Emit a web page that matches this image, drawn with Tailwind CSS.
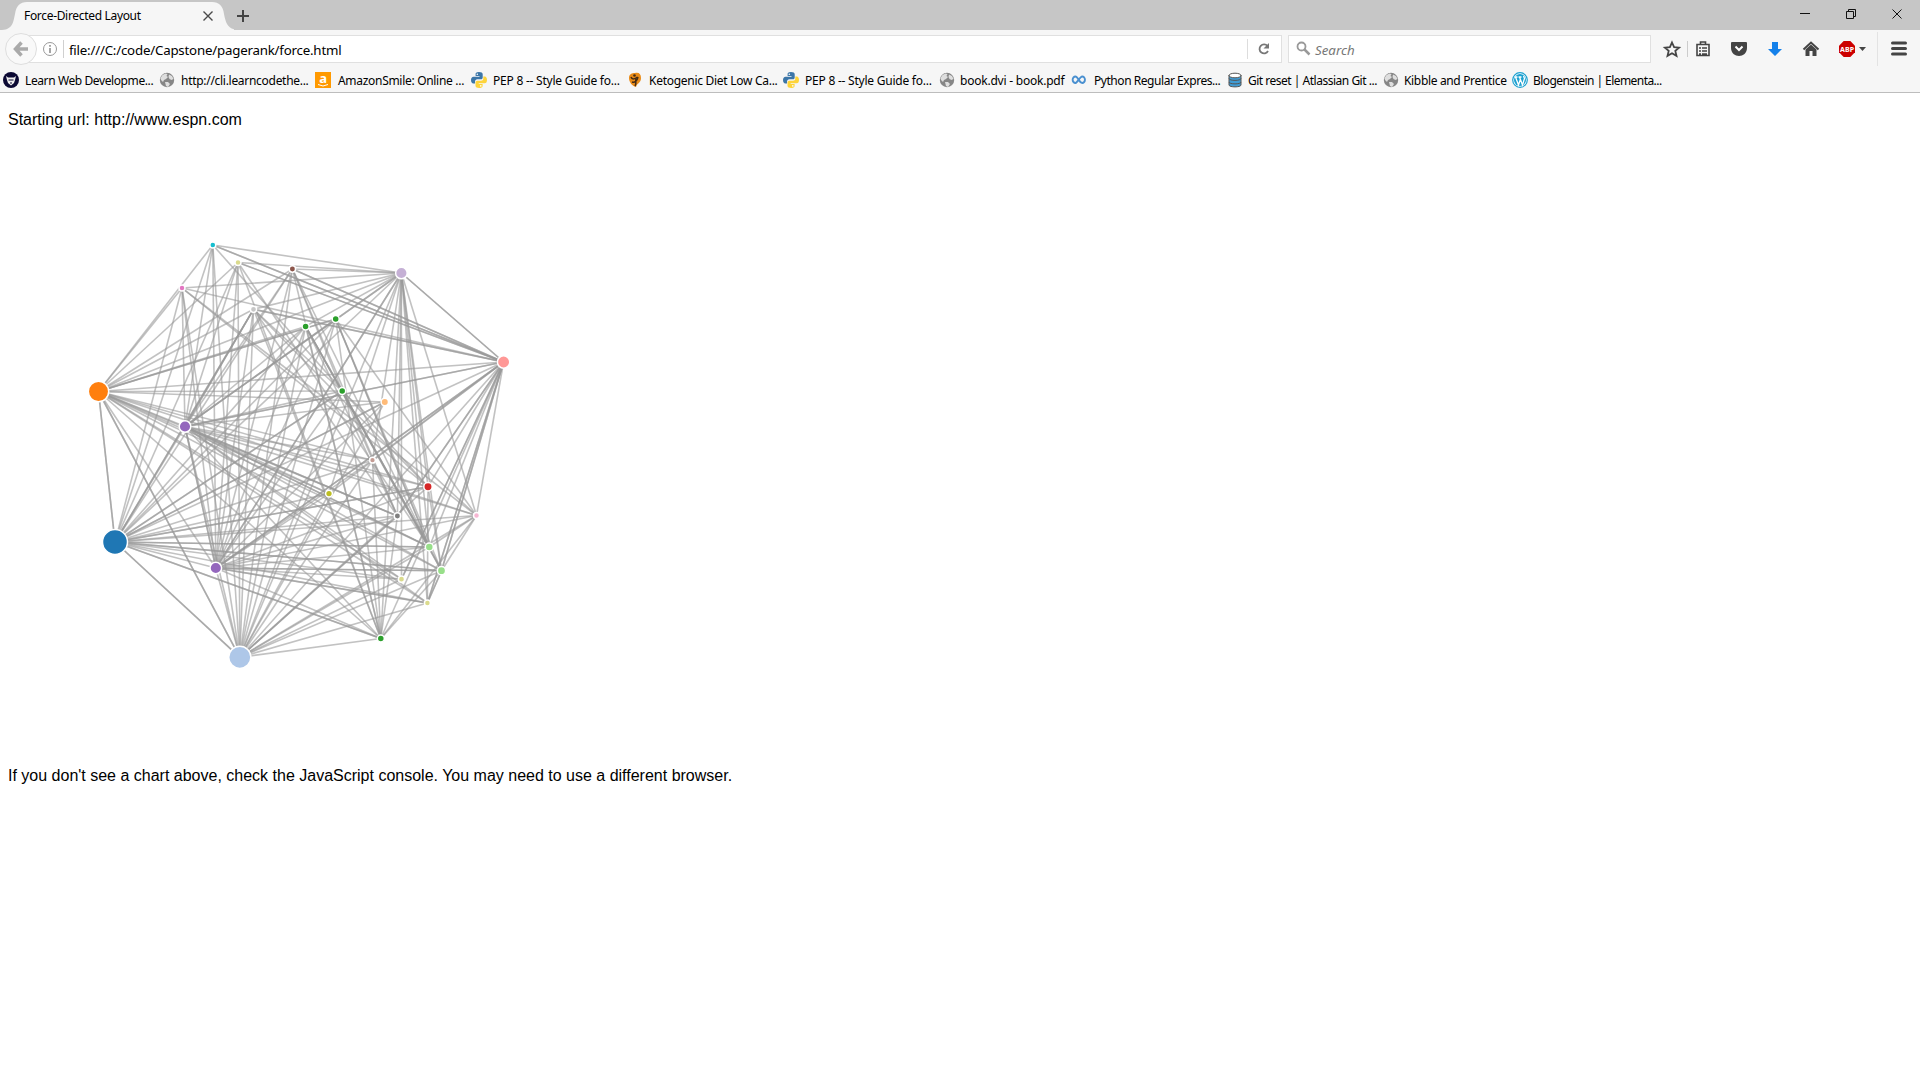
<!DOCTYPE html>
<html lang="en"><head><meta charset="utf-8"><title>Force-Directed Layout</title>
<script src="https://cdn.jsdelivr.net/npm/@tailwindcss/browser@4"></script></head>
<body class="h-screen overflow-hidden bg-white text-black font-['Noto_Sans',sans-serif]">
<svg class="hidden">
<symbol id="globe" viewBox="0 0 16 16"><circle cx="8" cy="8" r="7.2" fill="#868686"/><path d="M1.500 6l2-3 3-1.500 2 .5-1 2 1.500 1-2 2-2 1-1 2-2-2zM10 2.500l3 1.500 1.500 3-2 1-2-1-1-2zM6 10l3 0 2 2-2 3-2-1z" fill="#dedede"/></symbol>
<symbol id="py" viewBox="0 0 16 16"><path d="M8 0C5 0 4.600 1 4.600 2.200V4H8.500v.7H2.500C1 4.700 0 6 0 8s1 3.500 2.300 3.500H4V9.600C4 8.300 5 7.300 6.300 7.300H10c1 0 1.700-.8 1.700-1.800V2.200C11.700.8 10.300 0 8 0z" fill="#3c76a8"/><path d="M8.200 16c3 0 3.400-1 3.400-2.200V12H7.700v-.7h6C15.200 11.300 16 10 16 8s-.9-3.500-2.200-3.500h-1.500v2c0 1.300-1 2.300-2.300 2.300H6.300c-1 0-1.800.8-1.800 1.800v3.200C4.500 15.200 6 16 8.200 16z" fill="#fdd43b"/><circle cx="6.300" cy="2.200" r=".8" fill="#fff"/><circle cx="9.800" cy="13.900" r=".8" fill="#fff"/></symbol>
</svg>
<header>
<div class="flex h-[30px] bg-[#c6c6c6]">
 <div class="relative h-[30px] w-[234px]">
  <svg class="absolute inset-0" width="234" height="30"><path d="M0 30C12 30 13 24 15 14C16 6 20 2 27 2H212C219 2 223 6 224 14C226 24 228 30 240 30z" fill="#f6f6f6"/><path d="M203.500 11.500l9 9m0-9l-9 9" stroke="#4a4a4a" stroke-width="1.400"/></svg>
  <span class="relative ml-6 block pt-[7px] text-[12px] leading-[18px] tracking-[-0.32px]">Force-Directed Layout</span>
 </div>
 <svg width="18" height="30"><path d="M3 16h12M9 10v12" stroke="#444" stroke-width="2"/></svg>
 <svg class="ml-auto" width="130" height="30" fill="none" stroke="#111"><path d="M10 13.500h10M56.500 11.500h7v7h-7zM58.500 11v-1.500h7v7h-2M102.500 9.500l9 9m0-9l-9 9"/></svg>
</div>
<div class="flex h-9 items-center bg-[#f6f6f6]">
 <svg class="z-10" width="40" height="36"><circle cx="21" cy="19" r="15.500" fill="#f9f9f9" stroke="#dedede"/><path d="M28 19H17M21.500 12.500L15.500 19l6 6.500" fill="none" stroke="#aaa" stroke-width="3.500"/></svg>
 <div class="-ml-3 mt-[2px] flex h-7 w-[1254px] items-center border border-[#e0e0e0] bg-white">
  <svg class="ml-[14px]" width="22" height="26"><circle cx="7" cy="13" r="6.500" fill="none" stroke="#999"/><path d="M7 12v5M7 9v1.800" stroke="#888" stroke-width="1.500"/><path d="M20.500 4v18" stroke="#d0d0d0"/></svg>
  <span class="ml-[4px] pt-[2px] text-[13.300px] leading-[18px] tracking-[-0.21px]">file:///C:/code/Capstone/pagerank/force.html</span>
  <svg class="ml-auto" width="34" height="26"><path d="M.5 3v20" stroke="#ddd"/><path d="M20.500 10A4.500 4.500 0 1 0 21 15" fill="none" stroke="#777" stroke-width="1.800"/><path d="M22 7v5.500h-5.500z" fill="#777"/></svg>
 </div>
 <div class="ml-[6px] mt-[2px] flex h-7 w-[363px] items-center border border-[#e0e0e0] bg-white">
  <svg class="ml-[6px]" width="18" height="26"><circle cx="6.500" cy="10.500" r="4" fill="none" stroke="#999" stroke-width="1.800"/><path d="M9.500 13.500l5 5" stroke="#999" stroke-width="2.500"/></svg>
  <span class="ml-[2px] pt-[2px] text-[13.300px] italic leading-[18px] text-[#777]">Search</span>
 </div>
 <svg class="ml-auto" width="269" height="36" fill="none" stroke="#444"><path d="M21 12.500l2.100 4.600 5 .5-3.800 3.300 1.200 4.900-4.500-2.600-4.500 2.600 1.200-4.900-3.800-3.300 5-.5z" stroke-width="1.800"/><path d="M36.500 11v16" stroke="#ccc"/><path d="M46 14.500h12v11H46zM49.500 14v-2h5v2M48 18h2m1 0h5m-8 3h2m1 0h5m-8 3h2m1 0h5" stroke-width="1.600"/><path d="M81 12h14q1 0 1 1v5c0 5-4 8-8 8s-8-3-8-8v-5q0-1 1-1z" fill="#444" stroke="none"/><path d="M84.500 16.500l3.500 3.500 3.500-3.500" stroke="#fff" stroke-width="2"/><path d="M121 12h6v7h4l-7 7-7-7h4z" fill="#1581ea" stroke="none"/><path d="M152.500 19.500L160 12.500l7.500 7" stroke-width="2"/><path d="M154.500 19.500l5.500-5 5.500 5V26h-4v-5h-3v5h-4z" fill="#444" stroke="none"/><path d="M192.700 11h6.600l4.700 4.700v6.600l-4.700 4.700h-6.600l-4.700-4.700v-6.600z" fill="#c00" stroke="none"/><text x="189" y="22" textLength="14" font-size="7" font-weight="700" fill="#fff" stroke="none">ABP</text><path d="M208 17h7l-3.500 4z" fill="#444" stroke="none"/><path d="M226.500 2v34" stroke="#e3e3e3"/><path d="M241.500 13h13M241.500 18.500h13M241.500 24h13" stroke-width="3" stroke-linecap="round"/></svg>
</div>
<nav id="bookmarks" class="flex h-[27px] border-b border-[#bdbdbd] bg-[#f6f6f6] pt-[2px] text-[12px] leading-[18px]"></nav>
</header>
<main class="px-2 pt-[18px] font-['Liberation_Sans',sans-serif] text-base leading-[18px]">
 <p class="h-[18px]">Starting url: http://www.espn.com</p>
 <svg id="chart" class="-ml-2 block" width="720" height="637" viewBox="0 129 720 637"></svg>
 <p class="pt-[1px]">If you don't see a chart above, check the JavaScript console. You may need to use a different browser.</p>
</main>
<script>
const icons={
 learn:'<circle cx="8" cy="8" r="8" fill="#0b0933"/><path d="M3 4l2 1.500h6L13 4l-1 4-1 3-3 2.500L5 11 4 8z" fill="#eee"/><path d="M5.500 8h5M7 11h2" stroke="#0b0933"/>',
 globe:'<use href="#globe"/>',py:'<use href="#py"/>',
 amz:'<path d="M0 0h16v16H0z" fill="#f90"/><text x="4.200" y="10.500" font-size="13" font-weight="700" fill="#fff">a</text><path d="M3 12.500q5 3 10 0" fill="none" stroke="#fff"/>',
 keto:'<path d="M8 1c4-1 6 1 6 5 0 5-4 5-5 9-4-1-7-5-7-9 0-4 3-5 6-5z" fill="#e98b18"/><path d="M4 5c1 3 4 2 6.500 0M5 10c3 1 5-1 6-5M9 7c-1 3 1 4-1 7" fill="none" stroke="#432b16" stroke-width="1.500"/><circle cx="7.500" cy="3.500" r="1.300" fill="#432b16"/>',
 inf:'<path d="M8 8C6 5 5 4.500 4 4.500a3.200 3.200 0 0 0 0 6.500C6 11 9.500 4.500 12 4.500a3.200 3.200 0 0 1 0 6.500C10.500 11 9.500 10 8 8" transform="translate(1 0) scale(.85 1)" fill="none" stroke="#4a90d0" stroke-width="2.200"/>',
 db:'<path d="M2 3v10c0 2.500 12 2.500 12 0V3z" fill="#3f9bd4"/><ellipse cx="8" cy="3.500" rx="6" ry="2.300" fill="#fff" stroke="#555"/><path d="M2 3v10c0 2.500 12 2.500 12 0V3M2 6.500c0 2.500 12 2.500 12 0M2 10c0 2.500 12 2.500 12 0" fill="none" stroke="#555"/>',
 wp:'<circle cx="8" cy="8" r="7.300" fill="#fff" stroke="#1ba0d0" stroke-width="1.200"/><circle cx="8" cy="8" r="6" fill="#1ba0d0"/><path d="M3.500 5l3 8L8.500 7M7.500 5l3 8 2-6.500-1-2.500M2.800 5h2.700M6.500 5h3" fill="none" stroke="#fff" stroke-width="1.300"/>'};
// icon, icon x, label x, letter spacing, label
const marks=[['learn',3,25,-.4,'Learn Web Developme...'],['globe',159,181,-.29,'http://cli.learncodethe...'],['amz',315,338,-.3,'AmazonSmile: Online ...'],['py',471,493,-.23,'PEP 8 -- Style Guide fo...'],['keto',627,649,-.28,'Ketogenic Diet Low Ca...'],['py',783,805,-.23,'PEP 8 -- Style Guide fo...'],['globe',939,960,-.22,'book.dvi - book.pdf'],['inf',1071,1094,-.45,'Python Regular Expres...'],['db',1227,1248,-.49,'Git reset | Atlassian Git ...'],['globe',1383,1404,-.34,'Kibble and Prentice'],['wp',1512,1533,-.56,'Blogenstein | Elementa...']];
document.getElementById('bookmarks').innerHTML=marks.map((m,i)=>`<a class="flex shrink-0 items-center whitespace-nowrap" style="width:${(marks[i+1]?marks[i+1][1]:1700)-m[1]}px;margin-left:${i?0:3}px"><svg class="shrink-0" width="16" height="16" viewBox="0 0 16 16">${icons[m[0]]}</svg><span class="pt-[2px]" style="margin-left:${m[2]-m[1]-16}px;letter-spacing:${m[3]}px">${m[4]}</span></a>`).join('');
const nodes={C:[212.8,245,2.5,'#17becf'],y1:[238,262.5,2.5,'#dbdb8d'],br:[292.4,269,2.7,'#8c564b'],pk:[182,288,2.5,'#e377c2'],gr:[253.5,309.3,2.6,'#c7c7c7'],O:[98.5,391.5,9.7,'#ff7f0e'],P1:[185,426.5,5.3,'#9467bd'],L:[401.4,273,5.3,'#c5b0d5'],R:[503.6,362,5.7,'#ff9896'],g1:[305.6,326.4,3,'#2ca02c'],g2:[335.7,319,3,'#2ca02c'],g3:[342.2,391,3,'#2ca02c'],lo:[384.8,402,3.2,'#ffbb78'],rs:[372.5,460.2,2.4,'#c49c94'],ol:[329,493.6,2.9,'#bcbd22'],D:[428,486.7,3.7,'#d62728'],dk:[397.4,516,2.7,'#7f7f7f'],pl:[476.5,515.5,2.5,'#f7b6d2'],l1:[429.3,547,3.5,'#98df8a'],l2:[441.5,570.7,3.6,'#98df8a'],y2:[401.5,579.2,2.6,'#dbdb8d'],y3:[427.4,603,2.5,'#dbdb8d'],g4:[380.8,638.5,3,'#2ca02c'],B:[115,542,12,'#1f77b4'],P2:[215.8,568,5.3,'#9467bd'],W:[239.8,657.3,10.6,'#aec7e8']};
const links={
 B:'O O W W P1 P2 L R g4 g4 pl l1 l1 l2 l2 y2 y3 dk ol rs D D g1 g2 g3 g3 lo lo gr gr pk C y1 br',
 O:'C pk y1 br gr g1 g2 g2 L R g3 lo P1 P2 W W rs ol dk D pl l1 l2 y2 y3 g4',
 W:'P1 P2 L R C pk y1 br gr g1 g2 g3 lo rs ol D dk dk pl l1 l2 y2 y3 g4',
 L:'C y1 br pk gr g1 P1 P1 P2 P2 R R rs ol dk D l1 l2 y2 pl y3 g4',
 R:'C C y1 y1 br br pk gr gr P1 P1 P2 P2 dk dk g4 y2 y2 y3 y3 l1 l2 l2 pl D ol rs',
 P1:'C pk y1 br gr gr g1 g2 g3 lo rs D pl l1 l1 l2 y2 y3 g4 dk dk P2 P2 ol',
 P2:'C pk y1 br gr g1 g2 g3 lo rs ol D pl l1 l2 l2 y2 y3 y3 g4 dk',
 g4:'pl l2 br y1 g2 g1 gr rs dk',
 pl:'gr pk g2 l2 l1',
 l1:'g1 g2 g2 g3 g3 br y1',
 l2:'g1 g2 g3 l1 D',
 y3:'l2 l2 D',
 g3:'br g1 g1',dk:'g1 br gr g3',D:'pk gr C'};
let out='<g stroke="#999" stroke-opacity=".6" stroke-width="1.6">';
for(const a in links)for(const b of links[a].split(' ')){const p=nodes[a],q=nodes[b];out+=`<line x1="${p[0]}" y1="${p[1]}" x2="${q[0]}" y2="${q[1]}"/>`}
out+='</g><g stroke="#fff" stroke-width="1.5">';
for(const k in nodes){const n=nodes[k];out+=`<circle cx="${n[0]}" cy="${n[1]}" r="${n[2]+.5}" fill="${n[3]}"/>`}
document.getElementById('chart').innerHTML=out+'</g>';
</script>
</body></html>
